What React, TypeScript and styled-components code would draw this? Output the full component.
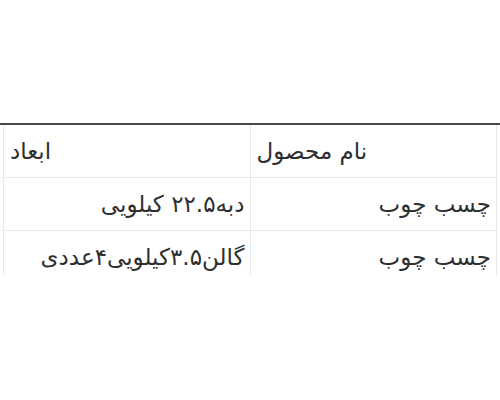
import React from "react";
import styled, { createGlobalStyle } from "styled-components";

const GlobalStyle = createGlobalStyle`
  html, body {
    margin: 0;
    padding: 0;
    background: #ffffff;
  }
  body {
    font-family: "DejaVu Sans", "Noto Sans", sans-serif;
    color: #2f2f2f;
  }
`;

const Page = styled.div`
  width: 500px;
  height: 400px;
  padding-top: 123px;
  box-sizing: border-box;
`;

const Frame = styled.div`
  height: 150px;
  overflow: hidden;
  border-top: 2px solid #4a4a4a;
`;

const Table = styled.table`
  direction: rtl;
  width: 494px;
  margin-left: 3px;
  border-collapse: collapse;
  table-layout: fixed;
`;

const HeadCell = styled.th`
  height: 52px;
  padding: 0 6px;
  font-weight: normal;
  font-size: 23px;
  text-align: left;
  border: 1px solid #e8e8e8;
  border-top: none;
`;

const Cell = styled.td`
  height: 52px;
  padding: 0 5px;
  font-size: 23px;
  text-align: right;
  white-space: nowrap;
  border: 1px solid #e8e8e8;
`;

const rows = [
  { name: "چسب چوب", size: "دبه۲۲.۵ کیلویی" },
  { name: "چسب چوب", size: "گالن۳.۵کیلویی۴عددی" },
];

export default function App() {
  return (
    <>
      <GlobalStyle />
      <Page>
        <Frame>
          <Table>
            <thead>
              <tr>
                <HeadCell>نام محصول</HeadCell>
                <HeadCell>ابعاد</HeadCell>
              </tr>
            </thead>
            <tbody>
              {rows.map((r, i) => (
                <tr key={i}>
                  <Cell>{r.name}</Cell>
                  <Cell>{r.size}</Cell>
                </tr>
              ))}
            </tbody>
          </Table>
        </Frame>
      </Page>
    </>
  );
}
